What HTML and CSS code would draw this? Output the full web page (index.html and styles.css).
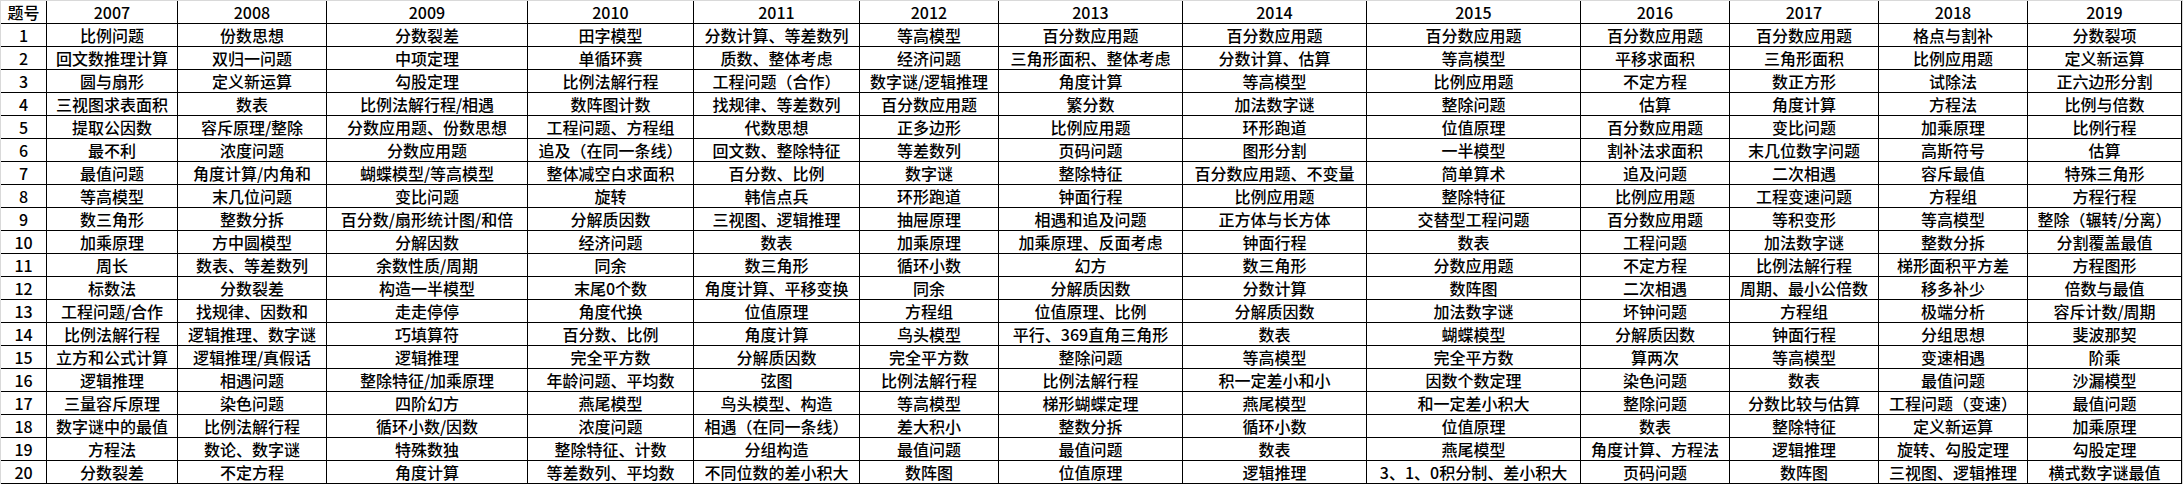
FILE: index.html
```html
<!DOCTYPE html>
<html lang="zh-CN">
<head>
<meta charset="utf-8">
<title>历年考点</title>
<link rel="stylesheet" href="styles.css">
</head>
<body>
<div class="sheet">
<div class="grid">
<div class="c">题号</div><div class="c">2007</div><div class="c">2008</div><div class="c">2009</div><div class="c">2010</div><div class="c">2011</div><div class="c">2012</div><div class="c">2013</div><div class="c">2014</div><div class="c">2015</div><div class="c">2016</div><div class="c">2017</div><div class="c">2018</div><div class="c">2019</div>
<div class="c">1</div><div class="c">比例问题</div><div class="c">份数思想</div><div class="c">分数裂差</div><div class="c">田字模型</div><div class="c">分数计算、等差数列</div><div class="c">等高模型</div><div class="c">百分数应用题</div><div class="c">百分数应用题</div><div class="c">百分数应用题</div><div class="c">百分数应用题</div><div class="c">百分数应用题</div><div class="c">格点与割补</div><div class="c">分数裂项</div>
<div class="c">2</div><div class="c">回文数推理计算</div><div class="c">双归一问题</div><div class="c">中项定理</div><div class="c">单循环赛</div><div class="c">质数、整体考虑</div><div class="c">经济问题</div><div class="c">三角形面积、整体考虑</div><div class="c">分数计算、估算</div><div class="c">等高模型</div><div class="c">平移求面积</div><div class="c">三角形面积</div><div class="c">比例应用题</div><div class="c">定义新运算</div>
<div class="c">3</div><div class="c">圆与扇形</div><div class="c">定义新运算</div><div class="c">勾股定理</div><div class="c">比例法解行程</div><div class="c">工程问题（合作）</div><div class="c">数字谜/逻辑推理</div><div class="c">角度计算</div><div class="c">等高模型</div><div class="c">比例应用题</div><div class="c">不定方程</div><div class="c">数正方形</div><div class="c">试除法</div><div class="c">正六边形分割</div>
<div class="c">4</div><div class="c">三视图求表面积</div><div class="c">数表</div><div class="c">比例法解行程/相遇</div><div class="c">数阵图计数</div><div class="c">找规律、等差数列</div><div class="c">百分数应用题</div><div class="c">繁分数</div><div class="c">加法数字谜</div><div class="c">整除问题</div><div class="c">估算</div><div class="c">角度计算</div><div class="c">方程法</div><div class="c">比例与倍数</div>
<div class="c">5</div><div class="c">提取公因数</div><div class="c">容斥原理/整除</div><div class="c">分数应用题、份数思想</div><div class="c">工程问题、方程组</div><div class="c">代数思想</div><div class="c">正多边形</div><div class="c">比例应用题</div><div class="c">环形跑道</div><div class="c">位值原理</div><div class="c">百分数应用题</div><div class="c">变比问题</div><div class="c">加乘原理</div><div class="c">比例行程</div>
<div class="c">6</div><div class="c">最不利</div><div class="c">浓度问题</div><div class="c">分数应用题</div><div class="c">追及（在同一条线）</div><div class="c">回文数、整除特征</div><div class="c">等差数列</div><div class="c">页码问题</div><div class="c">图形分割</div><div class="c">一半模型</div><div class="c">割补法求面积</div><div class="c">末几位数字问题</div><div class="c">高斯符号</div><div class="c">估算</div>
<div class="c">7</div><div class="c">最值问题</div><div class="c">角度计算/内角和</div><div class="c">蝴蝶模型/等高模型</div><div class="c">整体减空白求面积</div><div class="c">百分数、比例</div><div class="c">数字谜</div><div class="c">整除特征</div><div class="c">百分数应用题、不变量</div><div class="c">简单算术</div><div class="c">追及问题</div><div class="c">二次相遇</div><div class="c">容斥最值</div><div class="c">特殊三角形</div>
<div class="c">8</div><div class="c">等高模型</div><div class="c">末几位问题</div><div class="c">变比问题</div><div class="c">旋转</div><div class="c">韩信点兵</div><div class="c">环形跑道</div><div class="c">钟面行程</div><div class="c">比例应用题</div><div class="c">整除特征</div><div class="c">比例应用题</div><div class="c">工程变速问题</div><div class="c">方程组</div><div class="c">方程行程</div>
<div class="c">9</div><div class="c">数三角形</div><div class="c">整数分拆</div><div class="c">百分数/扇形统计图/和倍</div><div class="c">分解质因数</div><div class="c">三视图、逻辑推理</div><div class="c">抽屉原理</div><div class="c">相遇和追及问题</div><div class="c">正方体与长方体</div><div class="c">交替型工程问题</div><div class="c">百分数应用题</div><div class="c">等积变形</div><div class="c">等高模型</div><div class="c">整除（辗转/分离）</div>
<div class="c">10</div><div class="c">加乘原理</div><div class="c">方中圆模型</div><div class="c">分解因数</div><div class="c">经济问题</div><div class="c">数表</div><div class="c">加乘原理</div><div class="c">加乘原理、反面考虑</div><div class="c">钟面行程</div><div class="c">数表</div><div class="c">工程问题</div><div class="c">加法数字谜</div><div class="c">整数分拆</div><div class="c">分割覆盖最值</div>
<div class="c">11</div><div class="c">周长</div><div class="c">数表、等差数列</div><div class="c">余数性质/周期</div><div class="c">同余</div><div class="c">数三角形</div><div class="c">循环小数</div><div class="c">幻方</div><div class="c">数三角形</div><div class="c">分数应用题</div><div class="c">不定方程</div><div class="c">比例法解行程</div><div class="c">梯形面积平方差</div><div class="c">方程图形</div>
<div class="c">12</div><div class="c">标数法</div><div class="c">分数裂差</div><div class="c">构造一半模型</div><div class="c">末尾0个数</div><div class="c">角度计算、平移变换</div><div class="c">同余</div><div class="c">分解质因数</div><div class="c">分数计算</div><div class="c">数阵图</div><div class="c">二次相遇</div><div class="c">周期、最小公倍数</div><div class="c">移多补少</div><div class="c">倍数与最值</div>
<div class="c">13</div><div class="c">工程问题/合作</div><div class="c">找规律、因数和</div><div class="c">走走停停</div><div class="c">角度代换</div><div class="c">位值原理</div><div class="c">方程组</div><div class="c">位值原理、比例</div><div class="c">分解质因数</div><div class="c">加法数字谜</div><div class="c">坏钟问题</div><div class="c">方程组</div><div class="c">极端分析</div><div class="c">容斥计数/周期</div>
<div class="c">14</div><div class="c">比例法解行程</div><div class="c">逻辑推理、数字谜</div><div class="c">巧填算符</div><div class="c">百分数、比例</div><div class="c">角度计算</div><div class="c">鸟头模型</div><div class="c">平行、369直角三角形</div><div class="c">数表</div><div class="c">蝴蝶模型</div><div class="c">分解质因数</div><div class="c">钟面行程</div><div class="c">分组思想</div><div class="c">斐波那契</div>
<div class="c">15</div><div class="c">立方和公式计算</div><div class="c">逻辑推理/真假话</div><div class="c">逻辑推理</div><div class="c">完全平方数</div><div class="c">分解质因数</div><div class="c">完全平方数</div><div class="c">整除问题</div><div class="c">等高模型</div><div class="c">完全平方数</div><div class="c">算两次</div><div class="c">等高模型</div><div class="c">变速相遇</div><div class="c">阶乘</div>
<div class="c">16</div><div class="c">逻辑推理</div><div class="c">相遇问题</div><div class="c">整除特征/加乘原理</div><div class="c">年龄问题、平均数</div><div class="c">弦图</div><div class="c">比例法解行程</div><div class="c">比例法解行程</div><div class="c">积一定差小和小</div><div class="c">因数个数定理</div><div class="c">染色问题</div><div class="c">数表</div><div class="c">最值问题</div><div class="c">沙漏模型</div>
<div class="c">17</div><div class="c">三量容斥原理</div><div class="c">染色问题</div><div class="c">四阶幻方</div><div class="c">燕尾模型</div><div class="c">鸟头模型、构造</div><div class="c">等高模型</div><div class="c">梯形蝴蝶定理</div><div class="c">燕尾模型</div><div class="c">和一定差小积大</div><div class="c">整除问题</div><div class="c">分数比较与估算</div><div class="c">工程问题（变速）</div><div class="c">最值问题</div>
<div class="c">18</div><div class="c">数字谜中的最值</div><div class="c">比例法解行程</div><div class="c">循环小数/因数</div><div class="c">浓度问题</div><div class="c">相遇（在同一条线）</div><div class="c">差大积小</div><div class="c">整数分拆</div><div class="c">循环小数</div><div class="c">位值原理</div><div class="c">数表</div><div class="c">整除特征</div><div class="c">定义新运算</div><div class="c">加乘原理</div>
<div class="c">19</div><div class="c">方程法</div><div class="c">数论、数字谜</div><div class="c">特殊数独</div><div class="c">整除特征、计数</div><div class="c">分组构造</div><div class="c">最值问题</div><div class="c">最值问题</div><div class="c">数表</div><div class="c">燕尾模型</div><div class="c">角度计算、方程法</div><div class="c">逻辑推理</div><div class="c">旋转、勾股定理</div><div class="c">勾股定理</div>
<div class="c">20</div><div class="c">分数裂差</div><div class="c">不定方程</div><div class="c">角度计算</div><div class="c">等差数列、平均数</div><div class="c">不同位数的差小积大</div><div class="c">数阵图</div><div class="c">位值原理</div><div class="c">逻辑推理</div><div class="c">3、1、0积分制、差小积大</div><div class="c">页码问题</div><div class="c">数阵图</div><div class="c">三视图、逻辑推理</div><div class="c">横式数字谜最值</div>
</div>
</div>
</body>
</html>
```
FILE: styles.css
```css
html, body {
  margin: 0;
  padding: 0;
  background: #ffffff;
}
.sheet {
  width: 2183px;
  height: 484px;
  box-sizing: border-box;
  padding: 1px 0 0 1px;
  background: #d9d9d9;
  overflow: hidden;
}
.grid {
  display: grid;
  grid-template-columns: 46px 131px 149px 201px 166px 166px 139px 184px 184px 214px 149px 149px 149px 154px;
  grid-auto-rows: 23px;
  width: max-content;
  background: #ffffff;
}
.c {
  box-sizing: border-box;
  border-right: 1px solid #000;
  border-bottom: 1px solid #000;
  display: flex;
  align-items: center;
  justify-content: center;
  white-space: nowrap;
  font-family: "Noto Sans CJK SC", "Microsoft YaHei", sans-serif;
  font-size: 16px;
  font-weight: 500;
  line-height: 22px;
  color: #000;
  background: #fff;
}
```
